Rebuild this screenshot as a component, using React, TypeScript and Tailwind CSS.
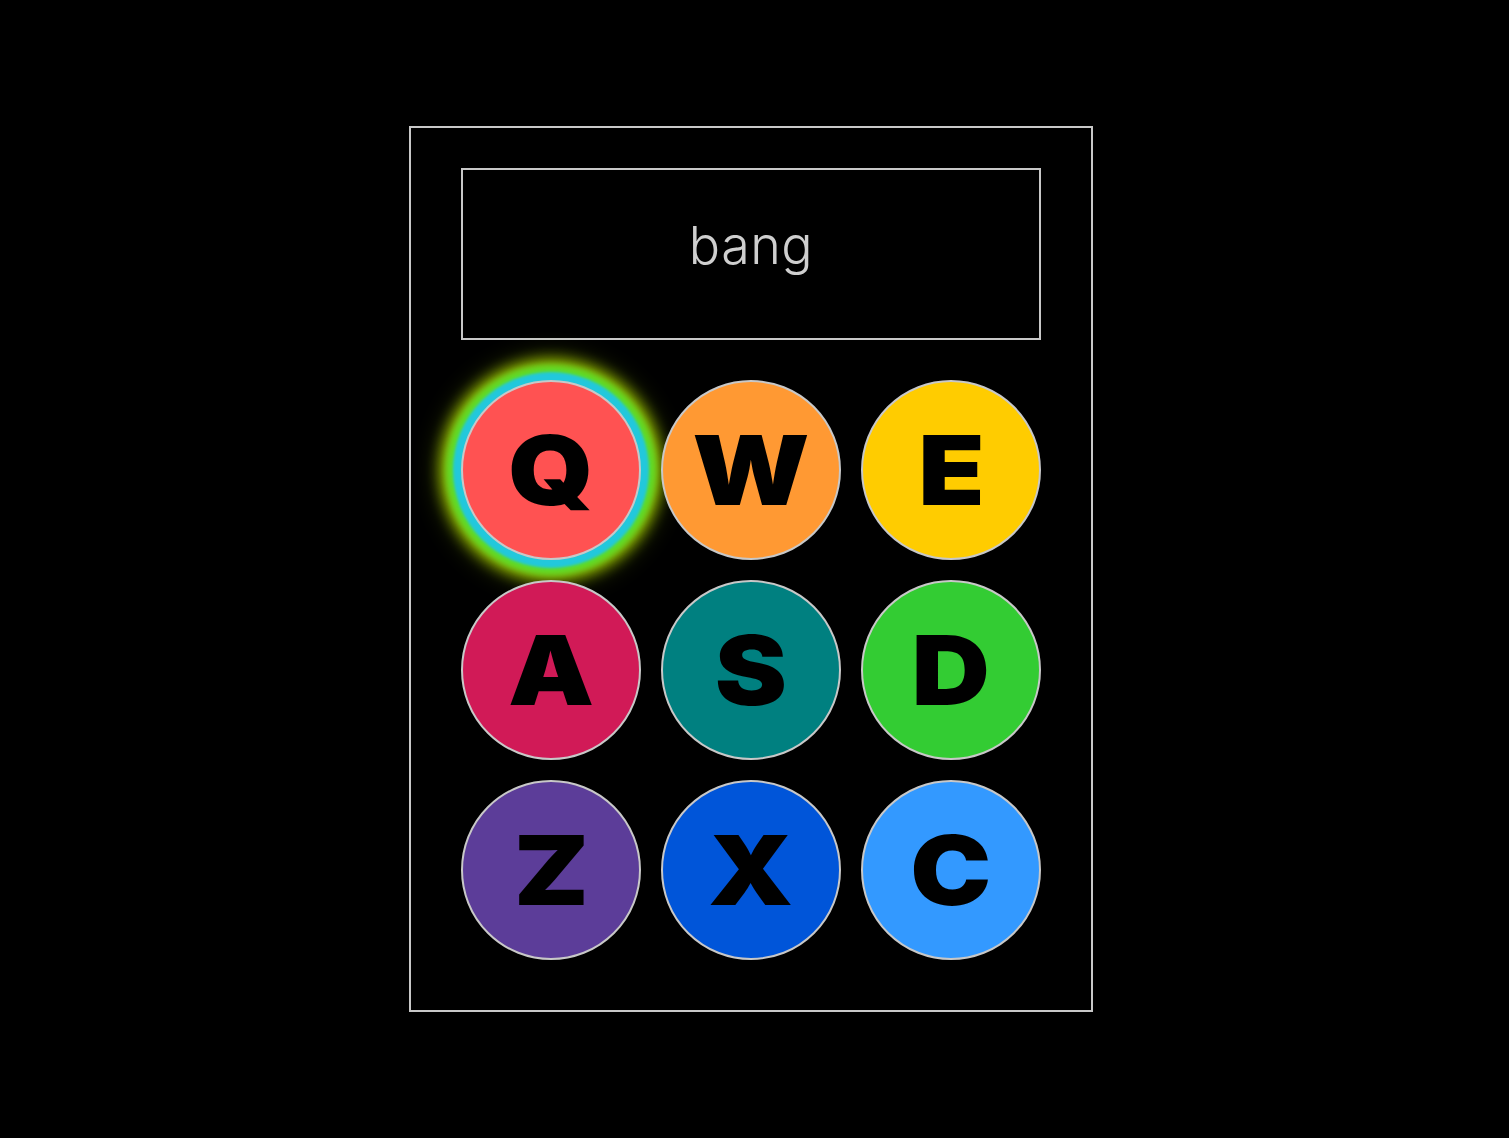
import React from "react";

const keys = [
  { k: "Q", bg: "bg-[#ff5252]", glow: true },
  { k: "W", bg: "bg-[#ff9933]" },
  { k: "E", bg: "bg-[#ffcc00]" },
  { k: "A", bg: "bg-[#d11a57]" },
  { k: "S", bg: "bg-[#008080]" },
  { k: "D", bg: "bg-[#33cc33]" },
  { k: "Z", bg: "bg-[#5c3d99]" },
  { k: "X", bg: "bg-[#0055d9]" },
  { k: "C", bg: "bg-[#3399ff]" },
];

export default function App() {
  return (
    <div className="flex h-screen w-full items-center justify-center bg-black pr-[7px]" style={{ fontFamily: "Inter, 'Open Sans', sans-serif" }}>
      <div className="flex w-[684px] flex-col border-2 border-[#c8c8c8] px-[50px] pt-[40px] pb-[50px]">
        <div className="flex h-[172px] w-[580px] items-center justify-center border-2 border-[#c8c8c8]">
          <span className="text-[52px] font-light leading-none text-[#cfcfcf] pb-[16px] tracking-[0.5px]">bang</span>
        </div>
        <div className="mt-[40px] grid grid-cols-3 gap-[20px]">
          {keys.map((key) => (
            <div
              key={key.k}
              className={`flex h-[180px] w-[180px] items-center justify-center rounded-full border-2 border-[#c8c8c8] ${key.bg} ${
                key.glow
                  ? "shadow-[0_0_3px_8px_#22c8dc,0_0_6px_15px_#5ddd2a,0_0_14px_21px_rgba(170,210,0,0.85),0_0_24px_24px_rgba(150,190,0,0.3)]"
                  : ""
              }`}
            >
              <span className="inline-block scale-x-[1.13] text-[96px] font-black leading-none text-black">{key.k}</span>
            </div>
          ))}
        </div>
      </div>
    </div>
  );
}
